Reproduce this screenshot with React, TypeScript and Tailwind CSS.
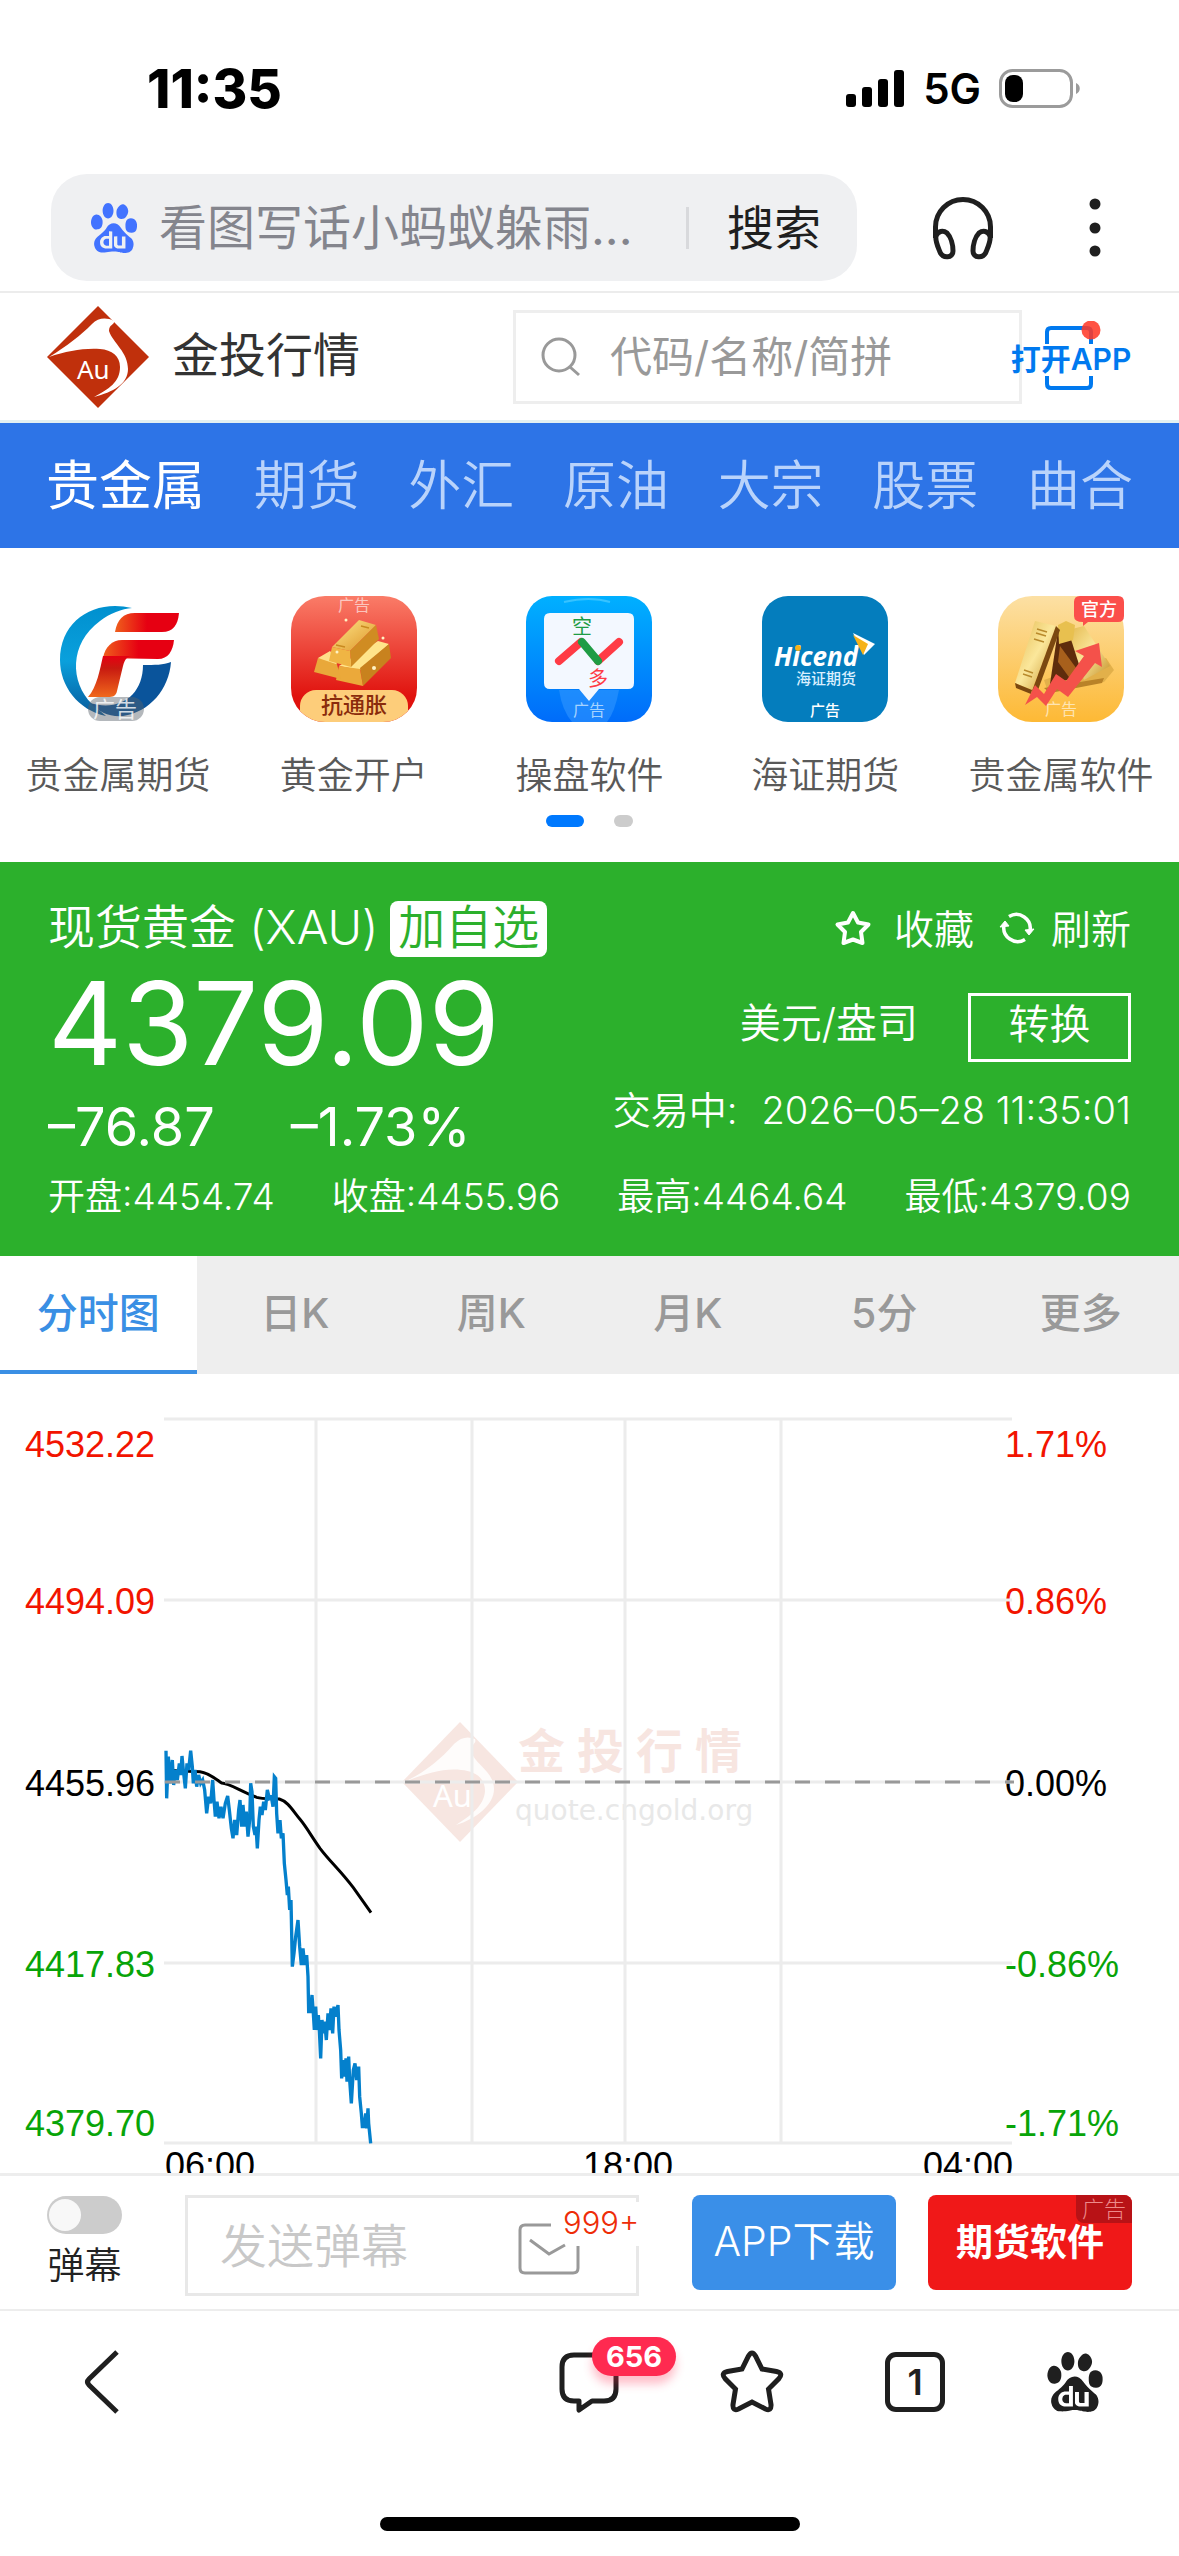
import React from "react";
import { SiBaidu } from "react-icons/si";

const cjk = "'Inter','Noto Sans CJK SC',sans-serif";

function StatusBar() {
  return (
    <div className="flex h-[174px] items-center justify-between pt-1 pr-[98px] pl-[147px]">
      <span className="text-[53px] leading-[60px] font-extrabold text-black">11:35</span>
      <div className="flex items-center">
        <svg width="60" height="38" viewBox="0 0 60 38" aria-hidden="true">
          <rect x="1" y="24" width="10" height="13" rx="3" />
          <rect x="17" y="17" width="10" height="20" rx="3" />
          <rect x="33" y="9" width="10" height="28" rx="3" />
          <rect x="49" y="0" width="10" height="37" rx="3" />
        </svg>
        <span className="ml-[18px] text-[42px] leading-[48px] font-semibold text-black">5G</span>
        <svg className="ml-[18px]" width="82" height="40" viewBox="0 0 82 40" aria-hidden="true">
          <rect x="1.5" y="1.5" width="71" height="36" rx="12" fill="none" stroke="#9b9b9b" strokeWidth="3" />
          <path d="M77 14c5 2 5 9 0 11z" fill="#9b9b9b" />
          <rect x="6" y="6" width="18" height="27" rx="8" />
        </svg>
      </div>
    </div>
  );
}

function BrowserBar() {
  return (
    <header className="flex h-[119px] items-start justify-between border-b-2 border-[#ececec] pr-16 pl-[51px]">
      <form className="flex h-[107px] w-[806px] items-center rounded-[36px] bg-[#eff0f2] pr-9 pl-[38px]">
        <SiBaidu className="size-[50px] shrink-0 text-[#4273ff]" />
        <input
          aria-label="百度搜索"
          placeholder="看图写话小蚂蚁躲雨..."
          className="ml-5 w-0 grow bg-transparent text-[48px] leading-[64px] outline-none placeholder:text-[#84858d]"
        />
        <span className="ml-4 h-[42px] w-[3px] bg-[#d8d9dc]" />
        <button type="button" className="ml-[38px] text-[47px] leading-[64px] text-[#1f1f1f]">
          搜索
        </button>
      </form>
      <div className="flex h-[107px] items-center gap-20">
        <button type="button" aria-label="听">
          <svg width="64" height="64" viewBox="0 0 64 64" fill="none" stroke="#1f1f1f" strokeWidth="5">
            <path d="M4.500 42V31a27.500 27.500 0 0 1 55 0v11" />
            <path d="M5 40c2-5 7-6 11-3 4 4 6 12 6 18 0 7-10 8-13 1-2-5-5-11-4-16z" />
            <path d="M59 40c-2-5-7-6-11-3-4 4-6 12-6 18 0 7 10 8 13 1 2-5 5-11 4-16z" />
          </svg>
        </button>
        <button type="button" aria-label="菜单">
          <svg width="40" height="64" viewBox="0 0 40 64" fill="#1f1f1f">
            <circle cx="20" cy="8" r="5.500" />
            <circle cx="20" cy="32" r="5.500" />
            <circle cx="20" cy="55" r="5.500" />
          </svg>
        </button>
      </div>
    </header>
  );
}

function Diamond({ size }: { size: number }) {
  return (
    <svg width={size} height={size} viewBox="0 0 102 102" role="img" aria-label="金投">
      <path d="M51 0 102 51 51 102 0 51z" fill="#c0300c" />
      <path
        d="M2 51C20 40 34 29 45 18c6-6 14-7 22-3 1 4-5 3-5 10 4 12 19 21 19 38 0 15-15 23-34 28 15-8 26-15 26-30 0-11-8-17-20-18C36 42 20 45 2 51z"
        fill="#fff"
      />
      <text x="30" y="73" fontSize="26" fill="#fff" fontFamily="'Noto Sans',sans-serif">
        Au
      </text>
    </svg>
  );
}

function SiteHeader() {
  return (
    <div className="flex h-[130px] items-center justify-between border-b-[3px] border-[#e3f0f2] pr-[47px] pl-[47px]">
      <a href="#home" className="flex items-center gap-[23px]">
        <Diamond size={102} />
        <h1 className="pb-1 text-[47px] leading-[64px] text-[#333]">金投行情</h1>
      </a>
      <div className="flex items-center">
        <label className="flex h-[94px] w-[509px] items-center border-3 border-[#eee] pl-[25px]">
          <svg width="40" height="40" viewBox="0 0 40 40" fill="none" stroke="#999" strokeWidth="3">
            <circle cx="18" cy="18" r="16" />
            <path d="m29 30 9 8" />
          </svg>
          <input
            aria-label="代码/名称/简拼"
            placeholder="代码/名称/简拼"
            className="ml-[29px] w-[390px] bg-transparent text-[42px] leading-[56px] outline-none placeholder:text-[#999]"
          />
        </label>
        <a href="#app" aria-label="打开APP" className="-ml-3">
          <svg width="122" height="72" viewBox="0 0 122 72">
            <path
              d="M37 23V11q0-4 4-4h36q4 0 4 4v12M37 55v8q0 4 4 4h36q4 0 4-4v-8"
              fill="none"
              stroke="#0079ef"
              strokeWidth="4"
            />
            <circle cx="81" cy="9" r="9.500" fill="#ff3a28" fillOpacity=".87" />
            <text x="61" y="49" textAnchor="middle" fontSize="30" fontWeight="600" fill="#0079ef" fontFamily={cjk}>
              打开APP
            </text>
          </svg>
        </a>
      </div>
    </div>
  );
}

const categories = ["贵金属", "期货", "外汇", "原油", "大宗", "股票", "曲合"];

function CategoryNav() {
  return (
    <nav className="flex h-[125px] items-center justify-between bg-[#2d74e7] pr-[46px] pl-[46px]">
      {categories.map((c, i) => (
        <a
          key={c}
          href="#category"
          className={
            i === 0 ? "text-[53px] leading-[72px] text-white" : "text-[53px] leading-[72px] font-[350] text-[#b9d3fb]"
          }
        >
          {c}
        </a>
      ))}
    </nav>
  );
}

function FuturesIcon() {
  return (
    <svg width="126" height="126" viewBox="0 0 126 126" fontFamily={cjk}>
      <defs>
        <linearGradient id="fa" x1="0" y1="0" x2="1" y2="0">
          <stop offset="0" stopColor="#ef5f1c" />
          <stop offset=".5" stopColor="#e60012" />
        </linearGradient>
        <linearGradient id="fc" x1="0" y1="0" x2="0" y2="1">
          <stop offset="0" stopColor="#e60012" />
          <stop offset=".3" stopColor="#c81a10" />
          <stop offset="1" stopColor="#f0681c" />
        </linearGradient>
        <linearGradient id="fb" x1="0" y1="0" x2="0" y2="1">
          <stop offset="0" stopColor="#0090cf" />
          <stop offset=".5" stopColor="#0aa0dc" />
          <stop offset="1" stopColor="#075a9c" />
        </linearGradient>
      </defs>
      <path d="M77 12C40 3 5 24 5 64c0 26 18 50 46 56l-14-12C15 86 14 48 45 25 55 17 67 13 77 12z" fill="url(#fb)" />
      <path d="M88 69c12 0 20 0 28-3-2 27-21 50-48 54-14 1-24-4-33-13 30 9 53-8 53-38z" fill="#0a549b" />
      <path d="M60 36c2-12 8-19 20-19h44c-1 12-6 19-17 19z" fill="url(#fa)" />
      <path d="M48 62c2-11 9-18 19-18h52c-1 11-6 19-16 19z" fill="url(#fa)" />
      <path d="M48 60h30c-6 0-8 3-10 10l-6 25c-1 5-4 6-9 6H33c9-10 12-28 15-41z" fill="url(#fc)" />
      <rect x="33" y="101" width="56" height="24" rx="12" fill="#59616a" fillOpacity=".45" />
      <text x="38" y="121" fontSize="22" fill="#fff" fillOpacity=".8">
        广告
      </text>
    </svg>
  );
}

function GoldAccountIcon() {
  return (
    <svg width="126" height="126" viewBox="0 0 126 126" fontFamily={cjk}>
      <defs>
        <linearGradient id="ga" x1="0" y1="0" x2="0" y2="1">
          <stop offset="0" stopColor="#fa7c68" />
          <stop offset=".8" stopColor="#e0120e" />
        </linearGradient>
        <linearGradient id="gb" x1="0" y1="0" x2="1" y2="1">
          <stop offset="0" stopColor="#ffe68a" />
          <stop offset="1" stopColor="#dc9426" />
        </linearGradient>
        <clipPath id="gclip">
          <rect width="126" height="126" rx="34" />
        </clipPath>
      </defs>
      <g clipPath="url(#gclip)">
        <rect width="126" height="126" fill="url(#ga)" />
        <text x="47" y="15" fontSize="16" fill="#fff" fillOpacity=".6">
          广告
        </text>
        <path d="m48 70 39-25 11 3-29 26z" fill="#ffe48a" />
        <path d="m98 48 2 14-28 28-3-18z" fill="#c8821e" />
        <path d="m48 70 21 3 3 17-27-6z" fill="#eba93a" />
        <path d="m27 62 18 3 5 18-27-7z" fill="#e9a83a" />
        <path d="m27 62 12-7 9 10-3 3z" fill="#ffe08a" />
        <path d="m68 24 17 5-26 26-18-4z" fill="url(#gb)" />
        <path d="m85 29 3 14-28 28-1-16z" fill="#d08c22" />
        <path d="m41 51 18 4 1 16-22-6z" fill="#f0b544" />
        <path d="m70 30 8 2M45 49l9 2" stroke="#c98a20" strokeWidth="1.500" />
        <g fill="#fff3c4">
          <circle cx="55" cy="24" r="1.500" />
          <circle cx="46" cy="56" r="1.500" />
          <circle cx="83" cy="72" r="2" />
          <circle cx="92" cy="42" r="1.500" />
        </g>
        <rect x="9" y="94" width="108" height="40" rx="16" fill="#fdcd7a" />
        <text x="63" y="117" textAnchor="middle" fontSize="22" fontWeight="500" fill="#8a2b0c">
          抗通胀
        </text>
      </g>
    </svg>
  );
}

function TradingIcon() {
  return (
    <svg width="126" height="126" viewBox="0 0 126 126" fontFamily={cjk}>
      <defs>
        <linearGradient id="ta" x1="0" y1="0" x2="0" y2="1">
          <stop offset="0" stopColor="#00b0ff" />
          <stop offset="1" stopColor="#006cfa" />
        </linearGradient>
      </defs>
      <rect width="126" height="126" rx="26" fill="url(#ta)" />
      <path d="M38 6q26-6 46 0" fill="none" stroke="#5cd0ff" strokeWidth="2" strokeOpacity=".6" />
      <path d="M33 94h60q-4 22-12 32H46q-10-12-13-32z" fill="#3a9bff" fillOpacity=".5" />
      <path
        d="M24 17h78q6 0 6 6v64q0 6-6 6H73l-10 12-10-12H24q-6 0-6-6V23q0-6 6-6z"
        fill="#f3f8ff"
      />
      <text x="46" y="38" fontSize="20" fill="#1f9c44">
        空
      </text>
      <text x="62" y="90" fontSize="20" fill="#ff3b45">
        多
      </text>
      <g strokeWidth="8" strokeLinecap="round" fill="none">
        <path d="m33 65 22-19M72 65l21-19" stroke="#ff3b45" />
        <path d="m56 46 16 19" stroke="#1f9c44" />
      </g>
      <text x="63" y="120" textAnchor="middle" fontSize="16" fill="#a5d3ff">
        广告
      </text>
    </svg>
  );
}

function HicendIcon() {
  return (
    <svg width="126" height="126" viewBox="0 0 126 126" fontFamily={cjk}>
      <rect width="126" height="126" rx="26" fill="#047dbd" />
      <text
        x="12"
        y="70"
        fontSize="26"
        fontWeight="700"
        fontStyle="italic"
        fill="#fff"
        fontFamily="'Open Sans','Noto Sans',sans-serif"
      >
        Hicend
      </text>
      <circle cx="36" cy="52" r="3" fill="#f5b21a" />
      <path d="m91 37 22 11-11 11z" fill="#fff" />
      <path d="m91 39 15 9-5 11z" fill="#f5b21a" />
      <text x="34" y="88" fontSize="15" fontWeight="500" fill="#d9efff">
        海证期货
      </text>
      <text x="63" y="120" textAnchor="middle" fontSize="15" fontWeight="500" fill="#fff">
        广告
      </text>
    </svg>
  );
}

function GoldSoftwareIcon() {
  return (
    <svg width="126" height="126" viewBox="0 0 126 126" fontFamily={cjk}>
      <defs>
        <linearGradient id="sa" x1="0" y1="0" x2="0" y2="1">
          <stop offset="0" stopColor="#fce0a4" />
          <stop offset="1" stopColor="#fdb935" />
        </linearGradient>
        <linearGradient id="sb" x1="0" y1="0" x2="1" y2="1">
          <stop offset="0" stopColor="#e3b84e" />
          <stop offset=".5" stopColor="#fbe79b" />
          <stop offset="1" stopColor="#c28d24" />
        </linearGradient>
      </defs>
      <rect width="126" height="126" rx="34" fill="url(#sa)" />
      <path d="m46 84 62-22 8 12-10 12-56 10z" fill="#e2b04a" />
      <path d="m46 92 60-10-2 5-52 10z" fill="#b98228" />
      <path d="m60 34 10-4 16 50-34 8z" fill="#5e2c0c" />
      <path d="m70 34 16-4 26 40-26 14z" fill="url(#sb)" />
      <path d="m62 50 22 30-8 8-16-22z" fill="#a8601c" />
      <path d="m60 29 8-4 9 4-2 15-14 4z" fill="#e8c04f" />
      <path d="m37 25 21 5-24 64-17-7z" fill="url(#sb)" />
      <path d="m58 30 4 4-22 60-6 1z" fill="#7b4810" />
      <path d="m17 87 17 7-1 4-15-6z" fill="#7b4810" />
      <path d="m39 33 10 3m-11 1 10 3m-12 3 10 3M26 74l9 3m-10 1 9 3" stroke="#b98a2c" strokeWidth="1.500" />
      <path d="m27 109 10-20 9 9 12-20 10 7 18-25-9-5 24-8 3 24-7-4-27 34-11-8-11 17-9-9z" fill="#f4514a" />
      <path d="M82 0h38q6 0 6 6v14q0 6-6 6H90l-5 4v-4q-9 0-9-6V6q0-6 6-6z" fill="#fb4f4b" />
      <text x="101" y="20" textAnchor="middle" fontSize="18" fontWeight="500" fill="#fff">
        官方
      </text>
      <text x="63" y="119" textAnchor="middle" fontSize="16" fill="#fff" fillOpacity=".6">
        广告
      </text>
    </svg>
  );
}

const shortcuts = [
  { label: "贵金属期货", icon: <FuturesIcon /> },
  { label: "黄金开户", icon: <GoldAccountIcon /> },
  { label: "操盘软件", icon: <TradingIcon /> },
  { label: "海证期货", icon: <HicendIcon /> },
  { label: "贵金属软件", icon: <GoldSoftwareIcon /> },
];

function Shortcuts() {
  return (
    <section className="h-[314px] pt-12">
      <div className="grid grid-cols-5">
        {shortcuts.map((s) => (
          <a key={s.label} href="#ad" className="flex flex-col items-center whitespace-nowrap">
            {s.icon}
            <span className="mt-7 text-[37px] leading-[52px] font-[350] text-[#595959]">{s.label}</span>
          </a>
        ))}
      </div>
      <div className="mt-[13px] flex justify-center gap-[30px]">
        <span className="h-3 w-[38px] rounded-[6px] bg-[#0079fe]" />
        <span className="h-3 w-[19px] rounded-[6px] bg-[#ccc]" />
      </div>
    </section>
  );
}

const stats = ["开盘:4454.74", "收盘:4455.96", "最高:4464.64", "最低:4379.09"];

function Quote() {
  return (
    <section className="h-[394px] bg-[#2cb02c] px-12 pt-[38px] font-[350] text-white">
      <div className="flex justify-between">
        <div>
          <div className="flex h-[58px] items-center gap-3 text-[47px] leading-[56px] whitespace-nowrap">
            <h2 className="pb-1">现货黄金 (XAU)</h2>
            <button type="button" className="h-14 rounded-lg bg-white px-2 pb-1 leading-[52px] text-[#2cb02c]">
              加自选
            </button>
          </div>
          <p className="h-[132px] text-[115px] leading-[132px] font-normal">4379.09</p>
          <p className="flex h-[74px] gap-[76px] text-[54px] leading-[74px] font-[375]">
            <span>–76.87</span>
            <span>–1.73%</span>
          </p>
        </div>
        <div className="flex flex-col items-end whitespace-nowrap">
          <div className="flex h-[60px] items-center text-[40px] leading-[56px]">
            <button type="button" className="flex items-center">
              <svg className="mb-1" width="38" height="38" viewBox="0 0 38 38" fill="none" stroke="#fff" strokeWidth="4" strokeLinejoin="round">
                <path d="m19 4 5 9.500 10.500 2-7.500 7.500 1.500 11-9.500-3.500L9.500 34 11 23l-7.500-7.500 10.500-2z" />
              </svg>
              <span className="ml-[22px]">收藏</span>
            </button>
            <button type="button" className="ml-[25px] flex items-center">
              <svg className="mb-1" width="36" height="36" viewBox="0 0 36 36" fill="none" stroke="#fff" strokeWidth="3.500">
                <path d="M10 6.500A14 14 0 0 1 31 21M26 29.500A14 14 0 0 1 5 15" />
                <path d="m26 20 4 5 5-6zM1 17l5-6 4 5z" fill="#fff" strokeWidth="1" />
              </svg>
              <span className="ml-4">刷新</span>
            </button>
          </div>
          <div className="mt-[33px] flex h-[69px] gap-[50px] text-[41px]">
            <span className="leading-[60px]">美元/盎司</span>
            <button type="button" className="h-[69px] w-[163px] border-3 border-white pb-2 leading-[56px]">
              转换
            </button>
          </div>
          <p className="flex h-24 items-center gap-6 text-[38px] leading-[52px]">
            <span>交易中:</span>
            <time>2026–05–28 11:35:01</time>
          </p>
        </div>
      </div>
      <div className="flex h-[66px] items-center justify-between text-[37px] leading-[52px] whitespace-nowrap">
        {stats.map((s) => (
          <span key={s}>{s}</span>
        ))}
      </div>
    </section>
  );
}

const periods = ["分时图", "日K", "周K", "月K", "5分", "更多"];

function PeriodTabs() {
  return (
    <div role="tablist" className="grid h-[118px] grid-cols-6 bg-[#eee] text-[41px] leading-[56px] font-medium">
      {periods.map((p, i) => (
        <button
          key={p}
          type="button"
          role="tab"
          aria-selected={i === 0}
          className={
            i === 0 ? "border-b-4 border-[#3a8fe4] bg-white text-[#3a8fe4]" : "border-b-4 border-[#eee] text-[#999]"
          }
        >
          {p}
        </button>
      ))}
    </div>
  );
}

const priceLine =
  "78,92 80,235 85,110 90,190 97,120 101,195 105,150 112,180 118,130 122,165 126,108 130,150 136,205 141,130 146,150 152,92 157,140 160,190 165,150 170,200 176,165 182,190 188,180 194,210 200,280 206,230 212,250 218,180 222,240 226,290 231,245 237,295 243,260 249,295 256,250 263,228 268,270 274,325 279,355 284,300 290,345 296,270 300,240 305,320 309,255 314,320 319,275 324,350 329,300 332,190 336,215 340,320 345,345 348,320 352,385 357,300 361,260 366,285 371,245 376,270 382,210 388,235 394,230 399,260 403,170 407,175 410,280 414,340 420,300 424,355 429,340 433,430 438,480 442,525 445,500 449,570 453,540 457,740 462,700 467,650 474,600 479,680 484,735 489,685 494,735 500,705 504,770 506,875 512,875 516,825 520,880 523,930 527,860 531,930 535,885 538,930 542,1015 546,900 550,940 554,905 559,960 564,880 568,930 573,865 578,940 582,860 587,890 594,855 597,930 602,990 605,1075 609,1020 614,1070 618,1015 621,1085 626,1010 629,1080 634,1150 640,1050 645,1030 650,1080 656,1040 659,1130 664,1180 667,1220 672,1220 677,1180 680,1225 684,1165 686,1210 692,1270";

const rows = [
  { y: 83, price: "4532.22", pct: "1.71%", color: "#f21400" },
  { y: 240, price: "4494.09", pct: "0.86%", color: "#f21400" },
  { y: 422, price: "4455.96", pct: "0.00%", color: "#000" },
  { y: 603, price: "4417.83", pct: "-0.86%", color: "#08a408" },
  { y: 762, price: "4379.70", pct: "-1.71%", color: "#08a408" },
];

function Chart() {
  return (
    <section className="h-[799px] overflow-hidden">
      <svg className="block w-full" viewBox="0 0 1179 810" fontFamily="'Liberation Sans',sans-serif" fontSize="36">
        <g fill="#c0300c" opacity=".12">
          <path d="M460 348 518 408 460 468 402 408z" />
          <text x="518 577 636 695" y="394" fontSize="47" fontWeight="600" fontFamily={cjk}>
            金投行情
          </text>
        </g>
        <path
          d="M404 408c20-9 36-22 50-38 7-7 14-8 21-5 2 5-4 5-4 12 3 13 23 20 23 38 0 16-18 30-38 36 14-9 28-19 29-34 0-14-11-20-24-21-18-2-36 4-57 12z"
          fill="#fff"
          fillOpacity=".85"
        />
        <text x="433" y="433" fontSize="31" fill="#fff" fontFamily="'Noto Sans',sans-serif">
          Au
        </text>
        <text x="515" y="446" fontSize="28" fill="#e8e8e8" fontFamily="'DejaVu Sans',sans-serif">
          quote.cngold.org
        </text>
        {rows.map((r) => (
          <g key={r.price} fill={r.color}>
            <text x="25" y={r.y}>
              {r.price}
            </text>
            <text x="1005" y={r.y}>
              {r.pct}
            </text>
          </g>
        ))}
        <path
          d="M164 45H1012M164 226H1012M164 408H1012M164 589H1012M164 769H1012M316 45V769M472 45V769M625 45V769M781 45V769"
          stroke="#ececec"
          strokeWidth="3"
        />
        <svg x="140" y="346" width="260" height="440" viewBox="0 0 780 1320" fill="none">
          <path
            d="M80 150 110 152 180 155C205 158 225 175 245 189 265 189 300 212 350 232 370 238 395 235 418 237 445 245 460 275 480 298 500 322 515 350 540 385 570 425 600 450 640 503L693 578"
            stroke="#000"
            strokeWidth="9"
          />
          <polyline points={priceLine} stroke="#0480cc" strokeWidth="10" />
        </svg>
        <path d="M165 408H1014" stroke="#999" strokeWidth="3" strokeDasharray="15 15" />
        <text x="165" y="804">
          06:00
        </text>
        <text x="583" y="804">
          18:00
        </text>
        <text x="923" y="804">
          04:00
        </text>
      </svg>
    </section>
  );
}

function CommentBar() {
  return (
    <section className="flex h-[138px] items-start border-t-3 border-b-2 border-[#ededed] px-[47px]">
      <label className="mt-5 flex flex-col items-center">
        <input
          type="checkbox"
          role="switch"
          className="h-[38px] w-[75px] appearance-none rounded-[19px] bg-[#ccc] before:mt-[3px] before:ml-[2px] before:block before:size-8 before:rounded-full before:bg-[#f8f8f8]"
        />
        <span className="mt-2.5 text-[37px] leading-[44px] font-[350] text-[#222]">弹幕</span>
      </label>
      <div className="relative mt-[19px] ml-[63px] flex h-[101px] grow border-3 border-[#e8e8e8]">
        <input
          aria-label="发送弹幕"
          placeholder="发送弹幕"
          className="w-0 grow bg-transparent pl-8 text-[47px] leading-[64px] font-[350] outline-none placeholder:text-[#c8c8c8]"
        />
        <button type="button" aria-label="消息 999+" className="absolute top-1 -right-1 h-[84px] w-[125px]">
          <svg width="125" height="84" viewBox="0 0 125 84">
            <path
              d="M10 23h48q5 0 5 5v38q0 5-5 5H10q-5 0-5-5V28q0-5 5-5z"
              fill="none"
              stroke="#999"
              strokeWidth="3"
            />
            <path d="M36 0h89v44H36z" fill="#fff" />
            <path d="m15 38 19 14 16-9" fill="none" stroke="#999" strokeWidth="3" />
            <text x="48" y="32" fontSize="31" fill="#ee2c08" fontFamily={cjk} fontWeight="350">
              999+
            </text>
          </svg>
        </button>
      </div>
      <button
        type="button"
        className="mt-[19px] ml-[53px] h-[95px] w-[204px] rounded-lg bg-[#3a8fe8] pb-1 text-[41px] leading-[56px] font-[350] text-white"
      >
        APP下载
      </button>
      <button
        type="button"
        className="relative mt-[19px] ml-8 h-[95px] w-[204px] overflow-hidden rounded-lg bg-[#f01818] text-[37px] leading-[56px] font-bold text-white"
      >
        期货软件
        <span className="absolute top-0 right-0 rounded-bl-lg bg-[#b81216] px-1.5 text-[22px] leading-7 font-light text-[#ee8a8a]">
          广告
        </span>
      </button>
    </section>
  );
}

function BottomNav() {
  return (
    <nav className="flex h-[142px] items-center justify-between pr-[74px] pl-[81px]">
      <button type="button" aria-label="返回">
        <svg width="40" height="64" viewBox="0 0 40 64" fill="none" stroke="#1f1f1f" strokeWidth="5">
          <path d="M36 2 8 29q-3 3 0 6l28 27" />
        </svg>
      </button>
      <div className="flex items-center gap-[100px]">
        <button type="button" aria-label="评论 656" className="relative">
          <svg width="60" height="64" viewBox="0 0 60 64" fill="none" stroke="#1f1f1f" strokeWidth="5">
            <path d="M15 5h30q12 0 12 12v22q0 12-12 12H33L20 60v-9h-5Q3 51 3 39V17Q3 5 15 5z" strokeLinejoin="round" />
          </svg>
          <span className="absolute bottom-[38px] left-[33px] rounded-[20px] bg-[#ff2a50] px-[14px] text-[29px] leading-[39px] font-bold text-white shadow-[0_8px_10px_rgba(255,42,80,0.3)]">
            656
          </span>
        </button>
        <button type="button" aria-label="收藏">
          <svg width="66" height="64" viewBox="0 0 66 64" fill="none" stroke="#1f1f1f" strokeWidth="5">
            <path d="M29.500 6q3.500-6 7 0l6.500 13 14.500 2.500q7 1.500 2.500 7L49.500 39 52 54.500q.5 7-5.500 4.500L33 52 19.500 59q-6 2.500-5.500-4.500L16.500 39 6 28.500q-4.500-5.500 2.500-7L23 19z" />
          </svg>
        </button>
        <button
          type="button"
          aria-label="窗口 1"
          className="size-[60px] rounded-[11px] border-5 border-[#1f1f1f] text-[36px] leading-[48px] font-semibold text-[#1f1f1f]"
        >
          1
        </button>
        <button type="button" aria-label="百度首页">
          <SiBaidu className="size-[60px] text-[#1f1f1f]" />
        </button>
      </div>
    </nav>
  );
}

export default function App() {
  return (
    <main className="min-h-screen overflow-hidden bg-white font-['Inter','Noto_Sans_CJK_SC',sans-serif]">
      <StatusBar />
      <BrowserBar />
      <SiteHeader />
      <CategoryNav />
      <Shortcuts />
      <Quote />
      <PeriodTabs />
      <Chart />
      <CommentBar />
      <BottomNav />
      <div className="mx-auto mt-16 h-[14px] w-[420px] rounded-full bg-black" />
    </main>
  );
}
